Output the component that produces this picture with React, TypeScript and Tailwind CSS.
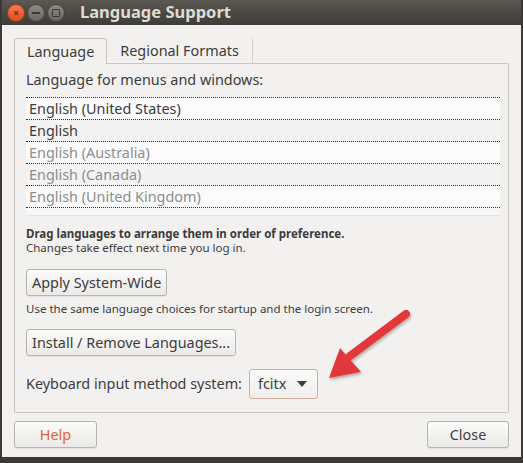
import React from "react";

const font = { fontFamily: '"Noto Sans", "Open Sans", sans-serif' };

const languages = [
  { name: "English (United States)", active: true },
  { name: "English", active: true },
  { name: "English (Australia)", active: false },
  { name: "English (Canada)", active: false },
  { name: "English (United Kingdom)", active: false },
];

function TitleButton({ kind }: { kind: "close" | "min" | "max" }) {
  if (kind === "close") {
    return (
      <div className="flex size-[18px] items-center justify-center rounded-full bg-gradient-to-b from-[#f37a4f] to-[#df4a16] border border-[#9e3a17]">
        <span className="text-[10px] leading-none font-bold text-[#6b2a10]">×</span>
      </div>
    );
  }
  return (
    <div className="flex size-[18px] items-center justify-center rounded-full bg-gradient-to-b from-[#8d8a84] to-[#68655f] border border-[#45433f]">
      {kind === "min" ? (
        <div className="h-[2px] w-[8px] bg-[#3d3b37]" />
      ) : (
        <div className="size-[8px] rounded-[1px] border border-[#3d3b37]" />
      )}
    </div>
  );
}

function GtkButton({ children, className = "" }: { children: React.ReactNode; className?: string }) {
  return (
    <div
      className={`flex h-[27px] items-center rounded-[3px] border border-[#b8b5b0] bg-gradient-to-b from-[#fbfbfa] to-[#ebeae8] px-[5px] text-[14.4px] text-[#3c3c3c] shadow-[0_1px_0_rgba(0,0,0,0.05)] ${className}`}
    >
      {children}
    </div>
  );
}

export default function App() {
  return (
    <div className="relative h-[463px] w-[523px] overflow-hidden bg-[#3a3935] pb-[6px] pl-[2px] pr-[2px]" style={font}>
      <div className="flex h-full flex-col bg-[#f2f1f0]">
        {/* title bar */}
        <div className="flex h-[25px] shrink-0 items-center bg-gradient-to-b from-[#5b5852] to-[#3d3c38] pl-[5px]">
          <div className="flex gap-[2px]">
            <TitleButton kind="close" />
            <TitleButton kind="min" />
            <TitleButton kind="max" />
          </div>
          <span className="ml-[15px] text-[16.5px] font-bold text-[#dfdbd2]">Language Support</span>
        </div>

        <div className="flex flex-1 flex-col px-[12px] pt-[12px]">
          {/* tabs */}
          <div className="flex h-[26px] items-end">
            <div className="relative z-10 -mb-px flex h-[26px] items-center rounded-t-[3px] border border-b-0 border-[#c9c6c1] bg-[#f2f1f0] px-[12px] text-[14.4px] text-[#3c3c3c]">
              Language
            </div>
            <div className="flex h-[24px] items-center border-r border-[#d4d1cc] px-[13px] text-[14.4px] text-[#3c3c3c]">
              Regional Formats
            </div>
          </div>

          {/* notebook page */}
          <div className="flex h-[350px] flex-col rounded-b-[2px] rounded-tr-[2px] border border-[#c9c6c1] px-[11px] pt-[6px]">
            <div className="text-[14.4px] leading-[20px] text-[#3c3c3c]">Language for menus and windows:</div>
            <div className="mt-[7px] w-[474px] bg-[#f7f7f7] pb-[7px] shadow-[0_1px_1px_rgba(0,0,0,0.05)]">
              <div className="border-t border-dotted border-[#333]" />
              {languages.map((l, i) => (
                <div
                  key={l.name}
                  className={`flex h-[22px] items-center border-b border-dotted border-[#333] pl-[3px] text-[14.4px] ${
                    i % 2 === 0 ? "bg-[#fbfbfb]" : "bg-[#f3f3f3]"
                  } ${l.active ? "text-[#3c3c3c]" : "text-[#8e8e8e]"}`}
                >
                  {l.name}
                </div>
              ))}
            </div>

            <div className="mt-[12px] text-[11.5px] leading-[14px] font-bold text-[#3c3c3c]">
              Drag languages to arrange them in order of preference.
            </div>
            <div className="text-[11.5px] leading-[14px] text-[#3c3c3c]">Changes take effect next time you log in.</div>

            <div className="mt-[14px] flex">
              <GtkButton>Apply System-Wide</GtkButton>
            </div>
            <div className="mt-[6px] text-[11.5px] leading-[14px] text-[#3c3c3c]">
              Use the same language choices for startup and the login screen.
            </div>
            <div className="mt-[13px] flex">
              <GtkButton>Install / Remove Languages...</GtkButton>
            </div>

            <div className="mt-[13px] flex items-center">
              <span className="text-[14.4px] text-[#3c3c3c]">Keyboard input method system:</span>
              <div className="ml-[7px] flex h-[30px] items-center gap-[11px] rounded-[3px] border border-[#d6ab9c] bg-gradient-to-b from-[#fafafa] to-[#efeeec] pl-[8px] pr-[10px] text-[14.4px] text-[#3c3c3c]">
                fcitx
                <svg width="10" height="6" viewBox="0 0 10 6">
                  <path d="M0 0 L10 0 L5 6 Z" fill="#3c3c3c" />
                </svg>
              </div>
            </div>
          </div>

          {/* bottom buttons */}
          <div className="mt-[8px] flex justify-between">
            <GtkButton className="w-[83px] justify-center">
              <span className="text-[#e0642c]">Help</span>
            </GtkButton>
            <GtkButton className="w-[82px] justify-center">Close</GtkButton>
          </div>
        </div>
      </div>

      {/* annotation arrow */}
      <svg className="absolute left-0 top-0" width="523" height="463" viewBox="0 0 523 463">
        <defs>
          <filter id="sh" x="-20%" y="-20%" width="140%" height="140%">
            <feDropShadow dx="1" dy="2" stdDeviation="1.5" floodColor="#000" floodOpacity="0.3" />
          </filter>
        </defs>
        <g filter="url(#sh)">
          <line x1="406" y1="314" x2="350" y2="356" stroke="#e2393a" strokeWidth="8" strokeLinecap="round" />
          <path d="M329 378 L340 348 L361 372 Z" fill="#e2393a" />
        </g>
      </svg>
    </div>
  );
}
